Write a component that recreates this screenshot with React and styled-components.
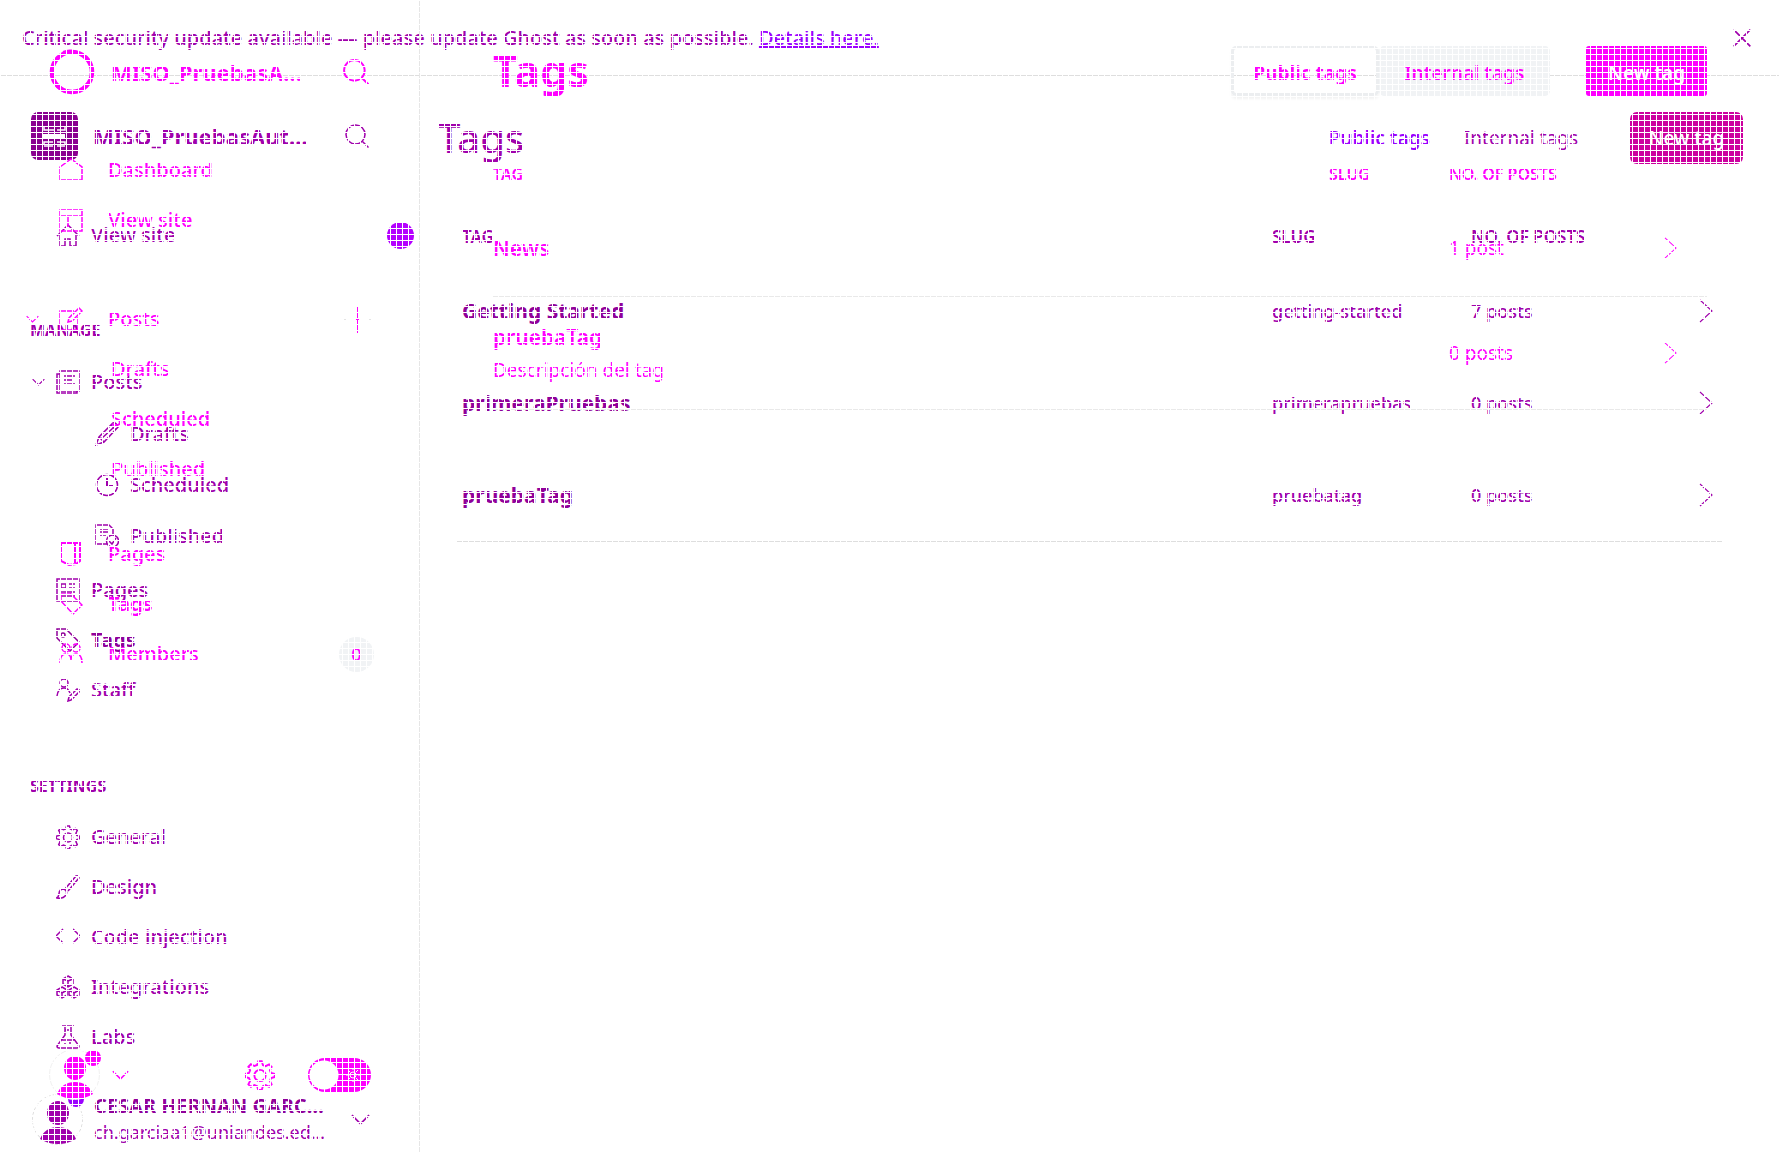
import React from "react";
import styled, { createGlobalStyle, css } from "styled-components";

const MAGENTA = "#ff00ff";
const PLUM = "#a000ac";
const DEEP = "#90009a";
const VIOLET = "#9b00ff";

const GlobalStyle = createGlobalStyle`
  * { box-sizing: border-box; }
  body { margin: 0; background: #fff; font-family: "Noto Sans", "Open Sans", sans-serif; }
  button, input { font: inherit; color: inherit; margin: 0; }
  button { border: 0; padding: 0; background: none; cursor: pointer; }
  a { color: inherit; text-decoration: none; }
  svg { display: block; flex: none; }
`;

const Stage = styled.div`
  position: relative;
  display: grid;
  min-height: 100vh;
  overflow: hidden;
  &::after {
    content: "";
    position: absolute;
    inset: 0;
    pointer-events: none;
    background:
      repeating-linear-gradient(90deg, #fff 0 1px, transparent 1px 6px),
      repeating-linear-gradient(180deg, #fff 0 1px, transparent 1px 6px);
  }
`;

const Layer = styled.div`
  grid-area: 1 / 1;
  display: grid;
  grid-template-columns: 420px minmax(0, 1fr);
  grid-template-rows: ${(p) => (p.$banner ? "auto 1fr" : "1fr")};
  color: ${(p) => p.$color};
  font-size: 20px;
  font-weight: 500;
  line-height: 26px;
`;

const Banner = styled.div`
  grid-column: 1 / -1;
  display: flex;
  align-items: center;
  justify-content: space-between;
  height: 76px;
  padding: 0 27px 0 22px;
  border-bottom: 1px solid #dedede;
`;
const BannerText = styled.p`
  margin: 0;
  a { color: ${VIOLET}; text-decoration: underline; }
`;

const Sidebar = styled.aside`
  display: flex;
  flex-direction: column;
  border-right: ${(p) => (p.$ruled ? "1px solid #e6e6e6" : "0")};
`;
const SiteHead = styled.div`
  display: flex;
  align-items: center;
  gap: ${(p) => p.$gap}px;
  padding: ${(p) => p.$pad};
  font-size: 22px;
  font-weight: 700;
`;
const SiteName = styled.span`
  flex: 1;
  white-space: nowrap;
`;
const Nav = styled.nav`
  display: flex;
  flex-direction: column;
  margin-top: ${(p) => p.$top}px;
`;
const Heading = styled.h3`
  margin: 0;
  padding-left: 30px;
  font-size: 16px;
  font-weight: 700;
  line-height: 51px;
`;
const Row = styled.div`
  display: flex;
  align-items: center;
  height: ${(p) => p.$h || 50}px;
  color: ${(p) => (p.$active && p.$old ? DEEP : "inherit")};
  font-weight: ${(p) => (p.$active ? 700 : 500)};
  padding-right: ${(p) => p.$end || 0}px;
`;
const Slot = styled.button`
  display: flex;
  align-items: center;
  width: ${(p) => p.$w}px;
  padding-left: ${(p) => p.$pad}px;
  height: 24px;
`;
const ItemLink = styled.a`
  display: flex;
  align-items: center;
  flex: 1;
  gap: ${(p) => p.$gap}px;
  padding-left: ${(p) => p.$pad || 0}px;
`;
const Dot = styled.span`
  width: 27px;
  height: 27px;
  border-radius: 50%;
  background: #b400ff;
`;
const Count = styled.span`
  display: grid;
  place-items: center;
  width: 35px;
  height: 35px;
  border-radius: 50%;
  background: #f1f3f5;
  font-size: 18px;
`;
const Footer = styled.div`
  display: flex;
  align-items: center;
  margin-top: auto;
  padding: ${(p) => p.$pad};
`;
const Avatar = styled.div`
  position: relative;
  width: 51px;
  height: 51px;
  border: 1px ${(p) => (p.$dashed ? "dashed #dcdcdc" : "solid #f1f1f1")};
  border-radius: 50%;
  &::after {
    content: "";
    position: absolute;
    top: ${(p) => (p.$dashed ? -4 : 0)}px;
    right: -2px;
    width: 16px;
    height: 16px;
    border-radius: 50%;
    background: ${(p) => p.$dot};
  }
`;
const UserInfo = styled.div`
  display: flex;
  flex-direction: column;
  flex: 1;
  padding-left: 11px;
  font-size: 18px;
  font-weight: 400;
  white-space: nowrap;
  strong { font-size: 20px; font-weight: 700; color: ${DEEP}; }
`;
const FootTools = styled.div`
  display: flex;
  align-items: center;
  gap: 33px;
  margin-left: auto;
`;
const Toggle = styled.label`
  position: relative;
  display: block;
  height: 34px;
  input {
    appearance: none;
    display: block;
    width: 63px;
    height: 34px;
    border-radius: 17px;
    background: radial-gradient(circle at 16px 17px, #fff 14px, ${MAGENTA} 15px);
  }
  svg { position: absolute; right: 11px; top: 10px; pointer-events: none; }
`;

const Main = styled.main`
  grid-column: 2;
`;
const Header = styled.header`
  display: flex;
  align-items: center;
  justify-content: space-between;
  padding: ${(p) => p.$pad};
  white-space: nowrap;
`;
const Title = styled.h1`
  margin: 0;
  font-size: ${(p) => p.$size}px;
  line-height: 50px;
  font-weight: ${(p) => p.$weight};
`;
const Actions = styled.div`
  display: flex;
  align-items: center;
  gap: ${(p) => p.$gap}px;
  font-size: 19px;
`;
const Segments = styled.div`
  display: flex;
`;
const Segment = styled.button`
  height: 50px;
  padding-top: 4px;
  width: ${(p) => (p.$on ? 148 : 171)}px;
  border-radius: 5px;
  font-size: 19px;
  font-weight: ${(p) => (p.$on ? 700 : 600)};
  ${(p) =>
    p.$on
      ? css`
          border: 3px solid #eceef0;
          box-shadow: 0 3px 3px #f3f3f3;
        `
      : css`
          background: #f1f3f5;
        `}
`;
const Tabs = styled.div`
  display: flex;
  gap: 34px;
`;
const TextTab = styled.button`
  color: ${(p) => (p.$on ? VIOLET : PLUM)};
  font-weight: ${(p) => (p.$on ? 600 : 400)};
`;
const NewTag = styled.button`
  height: ${(p) => (p.$old ? 52 : 50)}px;
  width: ${(p) => (p.$old ? 113 : 121)}px;
  border-radius: ${(p) => (p.$old ? 7 : 3)}px;
  padding-top: ${(p) => (p.$old ? 0 : 4)}px;
  background: ${(p) => (p.$old ? "#cc009f" : MAGENTA)};
  color: #fff;
  font-weight: ${(p) => (p.$old ? 500 : 600)};
`;
const TableWrap = styled.div`
  padding: ${(p) => p.$pad};
`;
const Table = styled.table`
  width: 100%;
  table-layout: fixed;
  border-collapse: collapse;
  font-size: ${(p) => (p.$old ? 18 : 19)}px;
  font-weight: ${(p) => (p.$old ? 500 : 400)};
  border-bottom: ${(p) => (p.$old ? "1px solid #dedede" : "0")};
  th {
    height: ${(p) => (p.$old ? 57 : 54)}px;
    padding: 0;
    text-align: left;
    font-size: ${(p) => (p.$old ? 17 : 16)}px;
    font-weight: 600;
    white-space: nowrap;
  }
  td { padding: 0; }
  th:first-child, td:first-child { padding-left: ${(p) => (p.$old ? 5 : 0)}px; }
`;
const Tr = styled.tr`
  height: ${(p) => p.$h}px;
  border-bottom: ${(p) => (p.$ruled ? "1px solid #e9e9e9" : "0")};
`;
const TagName = styled.a`
  display: block;
  font-size: 21px;
  font-weight: ${(p) => (p.$old ? 700 : 600)};
  color: ${(p) => (p.$old ? DEEP : "inherit")};
`;
const TagNote = styled.span`
  display: block;
  margin-top: 8px;
  line-height: 24px;
`;

const Icon = ({ size = 24, w = 1.5, box = 24, children, ...rest }) => (
  <svg width={size} height={size} viewBox={`0 0 ${box} ${box}`} fill="none" stroke="currentColor" strokeWidth={w} aria-hidden="true" {...rest}>
    {children}
  </svg>
);
const gear = "M9.7 4 10.6 1h2.8l.9 3 2.2.9 2.8-1.4 2 2L19.900 8.200l.9 2.200 3 .8v2.400l-3 .9-.9 2.200 1.400 2.800-2 2-2.800-1.400-2.200.9-.9 3h-2.800l-.9-3-2.200-.9-2.800 1.400-2-2 1.400-2.800-.9-2.200-3-.9v-2.400l3-.8.9-2.200-1.400-2.800 2-2 2.800 1.400Z";
const art = {
  house: <><path d="m1 13 11-11 11 11M4 12v11h5v-7h5v7h6V12" /></>,
  home: <path d="M1 9 12 1l11 8v13H1Z" />,
  browser: <><path d="M1 2h22v21H1ZM1 8h22M9 8v11" /></>,
  compose: <><path d="M15 4H1v19h18V10M9 15l1-4L20 1l3 3-10 10Z" /></>,
  posts: <><path d="M4 1h19v20H4ZM4 4H1v19h20v-2M8 6h11M8 10h8M8 14h11" /></>,
  pencil: <path d="m1 23 3-8L18 1q3-1 5 4L9 20Zm3-8 5 5M16 3l5 5M6 17 18 6" />,
  clock: <><circle cx="12" cy="12" r="10.500" /><path d="M12 5v8h6" strokeWidth="2" /></>,
  doc: <><path d="M12 20H1V1h13l4 4v6M5 5h8M5 8h8M5 11h6" /><circle cx="17.500" cy="17" r="6" /><path d="m14 17 3 3 4-6" /></>,
  layout: <><path d="M1 1h22v22H1ZM5 6h5v4H5ZM13 6h6M13 10h6M5 14h14M5 18h14" /></>,
  page: <path d="M2 1h19v18l-4 3-7 1-8-4ZM16 1v20" strokeWidth="2" />,
  tag: <><path d="M1 1h9l13 13-9 9L1 10Z" /><circle cx="7" cy="7" r="2" /></>,
  diamond: <><path d="m2 9 12 13 9-9L11 1M2 9V2h9" /></>,
  staff: <><circle cx="8" cy="5" r="4" /><path d="M1 18q1-8 7-8 4 0 6 5M12 23l1-4 8-8q3 0 2 3l-8 8Z" /></>,
  members: <><circle cx="7" cy="6" r="4" /><circle cx="17" cy="6" r="4" /><path d="M1 21q0-9 6-9 5 0 5 6 0-6 5-6 6 0 6 9" /></>,
  gear: <><path d={gear} /><circle cx="12" cy="12.400" r="4.500" /></>,
  brush: <path d="M2 22q-2 1-1 1 6 1 9-3 2-4-2-6-5 0-5 5ZM9 14 20 1q3-1 3 2L12 16" />,
  code: <path d="m7 4-7 7 7 7M17 4l7 7-7 7" />,
  cubes: <><path d="m12 1 5 3v5l-5 3-5-3V4Zm0 5 5-2M12 6 7 4M12 6v6M6 12l5 3v5l-5 3-5-3v-5Zm0 6 5-3M6 18l-5-3M6 18v5M18 12l5 3v5l-5 3-5-3v-5Zm0 6 5-3M18 18l-5-3M18 18v5" /></>,
  flask: <><path d="M6 1h12M9 1v9L1 21q0 2 2 2h18q2 0 2-2l-8-11V1M9 5h4M5 15h14M8 19h2M13 18h2" /></>,
  search: <><circle cx="10.500" cy="10.500" r="9.500" /><path d="m17.500 17.500 6 6" /></>,
  close: <path d="m2 2 20 20M22 2 2 22" />,
};
const Pic = ({ name, ...rest }) => <Icon {...rest}>{art[name]}</Icon>;

const Down = ({ width = 13 }) => (
  <svg width={width} height={Math.round(width / 2) + 1} viewBox="0 0 20 11" fill="none" stroke="currentColor" strokeWidth="1.800" aria-hidden="true">
    <path d="m1 1 9 9 9-9" />
  </svg>
);
const Next = ({ size = 24 }) => (
  <svg width={Math.round(size * 0.6)} height={size} viewBox="0 0 14 24" fill="none" stroke="currentColor" strokeWidth="1.100" aria-hidden="true">
    <path d="m1 1 12 11L1 23" />
  </svg>
);
const Person = () => (
  <svg width="49" height="49" viewBox="0 0 49 49" fill="currentColor" aria-hidden="true">
    <ellipse cx="25" cy="18" rx="11" ry="12" />
    <path d="M7 44q5-12 18-12t18 12q-8 5-18 5T7 44Z" />
  </svg>
);

const manage = [["layout", "Pages"], ["tag", "Tags", true], ["staff", "Staff"]];
const settings = [["gear", "General"], ["brush", "Design"], ["code", "Code injection"], ["cubes", "Integrations"], ["flask", "Labs"]];
const oldTags = [["Getting Started", "getting-started", "7 posts"], ["primeraPruebas", "primerapruebas", "0 posts"], ["pruebaTag", "pruebatag", "0 posts"]];

const OldItem = ({ icon, label, active, children }) => (
  <Row $old $active={active} $end={6}>
    <ItemLink href="#" $pad={56} $gap={11}><Pic name={icon} />{label}</ItemLink>
    {children}
  </Row>
);

function ClassicAdmin() {
  return (
    <Layer $banner $color={PLUM}>
      <Banner>
        <BannerText>
          Critical security update available — please update Ghost as soon as possible. <a href="#">Details here.</a>
        </BannerText>
        <button aria-label="Close"><Pic name="close" size={20} w={2} /></button>
      </Banner>
      <Sidebar>
        <SiteHead $gap={15} $pad="36px 51px 0 31px">
          <svg width="47" height="48" viewBox="0 0 47 48" aria-hidden="true">
            <rect width="47" height="48" rx="7" fill="#8a0090" />
            <path d="M13 15v3h10M26 18h8v-3M13 33v-3h9M26 30h8v3M13 34h9M26 34h8" fill="none" stroke="#fff" strokeWidth="1.500" />
            <rect x="12" y="22" width="22" height="4" fill="#fff" />
          </svg>
          <SiteName>MISO_PruebasAut…</SiteName>
          <button aria-label="Search"><Pic name="search" /></button>
        </SiteHead>
        <Nav $top={50}>
          <OldItem icon="house" label="View site"><Dot /></OldItem>
        </Nav>
        <Nav $top={45}>
          <Heading>MANAGE</Heading>
          <Row $h={52}>
            <Slot aria-label="Collapse posts" $w={56} $pad={32}><Down width={13} /></Slot>
            <ItemLink href="#" $gap={11}><Pic name="posts" />Posts</ItemLink>
          </Row>
          {[["pencil", "Drafts"], ["clock", "Scheduled"], ["doc", "Published"]].map(([icon, label]) => (
            <Row key={label} $h={51}>
              <ItemLink href="#" $pad={95} $gap={11}><Pic name={icon} />{label}</ItemLink>
            </Row>
          ))}
        </Nav>
        <Nav $top={4}>
          {manage.map(([icon, label, active]) => <OldItem key={label} icon={icon} label={label} active={active} />)}
        </Nav>
        <Nav $top={46}>
          <Heading>SETTINGS</Heading>
          {settings.map(([icon, label]) => <OldItem key={label} icon={icon} label={label} />)}
        </Nav>
        <Footer $pad="0 50px 7px 32px">
          <Avatar $dashed $dot={VIOLET}><Person /></Avatar>
          <UserInfo><strong>CESAR HERNAN GARC…</strong><span>ch.garciaa1@uniandes.ed…</span></UserInfo>
          <button aria-label="Account menu"><Down width={19} /></button>
        </Footer>
      </Sidebar>
      <Main>
        <Header $pad="36px 36px 0 18px">
          <Title $size={40} $weight={500}>Tags</Title>
          <Actions $gap={52}>
            <Tabs>
              <TextTab $on>Public tags</TextTab>
              <TextTab>Internal tags</TextTab>
            </Tabs>
            <NewTag $old>New tag</NewTag>
          </Actions>
        </Header>
        <TableWrap $pad="44px 56px 0 37px">
          <Table $old>
            <colgroup><col /><col width="199" /><col width="228" /><col width="24" /></colgroup>
            <thead><tr><th>TAG</th><th>SLUG</th><th>NO. OF POSTS</th><th aria-label="Open" /></tr></thead>
            <tbody>
              {oldTags.map(([name, slug, count]) => (
                <Tr key={name} $h={92}>
                  <td><TagName $old href="#">{name}</TagName></td>
                  <td>{slug}</td>
                  <td>{count}</td>
                  <td><Next /></td>
                </Tr>
              ))}
            </tbody>
          </Table>
        </TableWrap>
      </Main>
    </Layer>
  );
}

const NewItem = ({ icon, label, active, toggle, children }) => (
  <Row $active={active} $end={45}>
    {toggle && <Slot aria-label={`Collapse ${label}`} $w={59} $pad={26}><Down width={13} /></Slot>}
    <ItemLink href="#" $pad={toggle ? 0 : 59} $gap={25}><Pic name={icon} />{label}</ItemLink>
    {children}
  </Row>
);

function ModernAdmin() {
  return (
    <Layer $color={MAGENTA}>
      <Sidebar $ruled>
        <SiteHead $gap={16} $pad="49px 50px 0 49px">
          <svg width="46" height="46" viewBox="0 0 46 46" fill="none" stroke="currentColor" aria-hidden="true">
            <circle cx="23" cy="23" r="20" strokeWidth="4.500" />
            <path d="M14 3q8-4 18 2 9 6 12 16M2 27q4 12 14 16" strokeWidth="2" />
          </svg>
          <SiteName>MISO_PruebasA…</SiteName>
          <button aria-label="Search"><Pic name="search" size={26} w={1.8} /></button>
        </SiteHead>
        <Nav $top={50}>
          <NewItem icon="home" label="Dashboard" />
          <NewItem icon="browser" label="View site" />
        </Nav>
        <Nav $top={49}>
          <NewItem icon="compose" label="Posts" toggle>
            <Slot aria-label="New post" $w={30}>
              <Icon size={27} box={27} w={1}><path d="M13.500 0v27M12 13.500h3" /><path d="M0 13.500h2M25 13.500h2" stroke="#e4e4e4" /></Icon>
            </Slot>
          </NewItem>
          {["Drafts", "Scheduled", "Published"].map((label) => (
            <Row key={label}><ItemLink href="#" $pad={111}>{label}</ItemLink></Row>
          ))}
        </Nav>
        <Nav $top={35}>
          <NewItem icon="page" label="Pages" />
          <NewItem icon="diamond" label="Tags" active />
          <NewItem icon="members" label="Members"><Count>0</Count></NewItem>
        </Nav>
        <Footer $pad="0 48px 52px 49px">
          <Avatar $dot={MAGENTA}><Person /></Avatar>
          <Slot aria-label="Account" $w={32} $pad={12}><Down width={17} /></Slot>
          <FootTools>
            <button aria-label="Settings"><Pic name="gear" size={30} /></button>
            <Toggle>
              <input type="checkbox" aria-label="Night mode" />
              <svg width="14" height="14" viewBox="0 0 14 14" fill="none" stroke="#fff" aria-hidden="true">
                <circle cx="7" cy="7" r="3" /><path d="M7 0v2M7 12v2M0 7h2M12 7h2M2 2l2 2M10 10l2 2M12 2l-2 2M2 12l2-2" />
              </svg>
            </Toggle>
          </FootTools>
        </Footer>
      </Sidebar>
      <Main>
        <Header $pad="46px 72px 0 73px">
          <Title $size={43} $weight={700}>Tags</Title>
          <Actions $gap={36}>
            <Segments><Segment $on>Public tags</Segment><Segment>Internal tags</Segment></Segments>
            <NewTag>New tag</NewTag>
          </Actions>
        </Header>
        <TableWrap $pad="51px 72px 0 73px">
          <Table>
            <colgroup><col /><col width="120" /><col width="215" /><col width="43" /></colgroup>
            <thead><tr><th>TAG</th><th>SLUG</th><th>NO. OF POSTS</th><th aria-label="Open" /></tr></thead>
            <tbody>
              <Tr $h={95} $ruled>
                <td><TagName href="#">News</TagName></td><td /><td>1 post</td><td><Next size={22} /></td>
              </Tr>
              <Tr $h={113} $ruled>
                <td><TagName href="#">pruebaTag</TagName><TagNote>Descripción del tag</TagNote></td><td /><td>0 posts</td><td><Next size={22} /></td>
              </Tr>
            </tbody>
          </Table>
        </TableWrap>
      </Main>
    </Layer>
  );
}

export default function App() {
  return (
    <>
      <GlobalStyle />
      <Stage>
        <ClassicAdmin />
        <ModernAdmin />
      </Stage>
    </>
  );
}
